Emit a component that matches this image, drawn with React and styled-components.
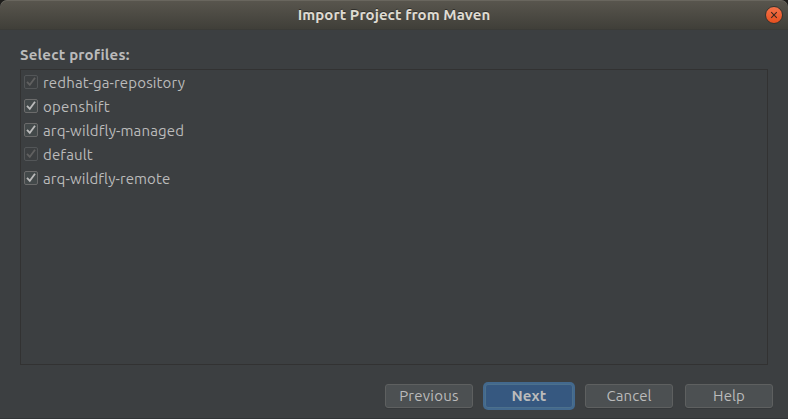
import React from "react";
import styled, { createGlobalStyle } from "styled-components";

const GlobalStyle = createGlobalStyle`
  * { box-sizing: border-box; }
  body { margin: 0; background: #1d1c1a; }
`;

const Window = styled.main`
  width: 788px;
  height: 419px;
  display: flex;
  flex-direction: column;
  overflow: hidden;
  background: #3c3f41;
  border-bottom: 1px solid #333638;
  border-radius: 7px 7px 0 0;
  color: #bbbbbb;
  font-family: Ubuntu, "Noto Sans", sans-serif;
  font-size: 15px;
`;

const TitleBar = styled.header`
  height: 30px;
  flex: none;
  display: grid;
  grid-template-columns: 23px 1fr 23px;
  align-items: center;
  background: linear-gradient(#59564e, #403f39);
  border-bottom: 1px solid #3b3b37;
  box-shadow: inset 0 1px #69665e;
  border-radius: 7px 7px 0 0;
`;

const Title = styled.h1`
  grid-column: 2;
  margin: 0;
  text-align: center;
  font-size: 15px;
  line-height: 29px;
  font-weight: 700;
  letter-spacing: ${(p) => p.$spacing}px;
  color: #dfdbd2;
  text-shadow: 0 -1px #302f2b;
`;

const CloseButton = styled.button`
  width: 18px;
  height: 18px;
  padding: 0;
  border: 1px solid #36342f;
  border-radius: 50%;
  background: linear-gradient(#f4734a, #e7501f);
  display: grid;
  place-items: center;
`;

const Content = styled.section`
  flex: 1;
  display: flex;
  flex-direction: column;
  padding: 15px 15px 10px 20px;
`;

const Heading = styled.h2`
  margin: 0 0 4px;
  height: 20px;
  line-height: 20px;
  font-size: 15px;
  font-weight: 700;
  letter-spacing: ${(p) => p.$spacing}px;
`;

const ProfileList = styled.ul`
  width: 748px;
  height: 296px;
  margin: 0;
  padding: 0 0 0 3px;
  list-style: none;
  border: 1px solid #323232;
`;

const Profile = styled.li`
  height: 24px;
  display: flex;
  align-items: center;
  gap: 5px;
  line-height: 24px;
  letter-spacing: ${(p) => p.$spacing}px;
`;

const ProfileName = styled.span`
  padding-top: 2px;
`;

const CheckBox = styled.span`
  width: 14px;
  height: 14px;
  flex: none;
  display: grid;
  place-items: center;
  border: 1px solid ${(p) => (p.$disabled ? "#535658" : "#6b6b6b")};
  border-radius: 2px;
  background: ${(p) => (p.$disabled ? "#3c3f41" : "#43494a")};
  color: ${(p) => (p.$disabled ? "#606060" : "#bbbbbb")};
`;

const Actions = styled.footer`
  display: flex;
  justify-content: flex-end;
  gap: 12px;
  margin-top: 19px;
`;

const ActionButton = styled.button`
  width: 88px;
  height: 24px;
  padding: 0;
  border: 1px solid ${(p) => (p.$primary ? "#4c708c" : "#5e6060")};
  border-radius: 3px;
  background: ${(p) => (p.$primary ? "#365880" : "#4c5052")};
  box-shadow: ${(p) => (p.$primary ? "0 0 0 2px #43698e" : "0 1px #36393b")};
  color: #bbbbbb;
  font: inherit;
  font-size: 15px;
  line-height: 22px;
  font-weight: ${(p) => (p.$primary ? 700 : 400)};
  letter-spacing: ${(p) => p.$spacing}px;
`;

const profiles = [
  { name: "redhat-ga-repository", disabled: true, spacing: 0.15 },
  { name: "openshift", spacing: 0.25 },
  { name: "arq-wildfly-managed", spacing: 0.15 },
  { name: "default", disabled: true, spacing: 0.15 },
  { name: "arq-wildfly-remote", spacing: 0.1 },
];

const actions = [
  { label: "Previous", spacing: 0.25 },
  { label: "Next", primary: true, spacing: 0.1 },
  { label: "Cancel", spacing: 0.1 },
  { label: "Help", spacing: 0.1 },
];

export default function App() {
  return (
    <>
      <GlobalStyle />
      <Window>
        <TitleBar>
          <Title $spacing={0.07}>Import Project from Maven</Title>
          <CloseButton aria-label="Close">
            <svg width="8" height="8" viewBox="0 0 8 8">
              <path d="M1.2 1.2l5.6 5.6M6.8 1.2l-5.6 5.6" stroke="#3b271f" strokeWidth="1.1" />
            </svg>
          </CloseButton>
        </TitleBar>
        <Content>
          <Heading $spacing={0.2}>Select profiles:</Heading>
          <ProfileList>
            {profiles.map((p) => (
              <Profile key={p.name} $spacing={p.spacing}>
                <CheckBox role="checkbox" aria-checked="true" $disabled={p.disabled}>
                  <svg width="12" height="12" viewBox="0 0 12 12" fill="none">
                    <path d="M2 5.8l2.8 3L10 1.8" stroke="currentColor" strokeWidth="1.8" />
                  </svg>
                </CheckBox>
                <ProfileName>{p.name}</ProfileName>
              </Profile>
            ))}
          </ProfileList>
          <Actions>
            {actions.map((a) => (
              <ActionButton key={a.label} $primary={a.primary} $spacing={a.spacing}>
                {a.label}
              </ActionButton>
            ))}
          </Actions>
        </Content>
      </Window>
    </>
  );
}
